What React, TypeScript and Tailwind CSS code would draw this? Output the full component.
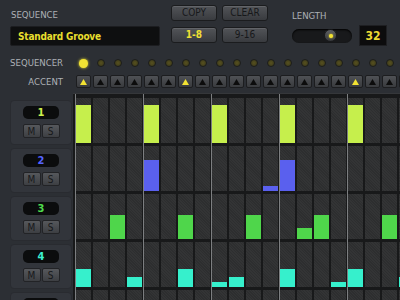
import React from "react";

const COLS = 20;
const ACCENTS = [0, 6, 16];

type Track = { n: string; num: string; bar: string; bars: Record<number, number>; full: boolean };

const TRACKS: Track[] = [
  { n: "1", num: "text-[#cdf04e]", bar: "bg-[#c6ef4c]", bars: { 0: 38, 4: 38, 8: 38, 12: 38, 16: 38 }, full: true },
  { n: "2", num: "text-[#5563ff]", bar: "bg-[#5a60ee]", bars: { 4: 31, 11: 5, 12: 31 }, full: true },
  { n: "3", num: "text-[#4fdc4c]", bar: "bg-[#4fd64b]", bars: { 2: 24, 6: 24, 10: 24, 13: 11, 14: 24, 18: 24 }, full: true },
  { n: "4", num: "text-[#3cf0d0]", bar: "bg-[#36f0cc]", bars: { 0: 18, 3: 10, 6: 18, 8: 5, 9: 10, 12: 18, 15: 5, 16: 18, 19: 10 }, full: true },
  { n: "5", num: "text-[#f04848]", bar: "bg-[#f04848]", bars: {}, full: false },
];

function Btn({ label, active }: { label: string; active?: boolean }) {
  return (
    <div
      className={`w-[46px] h-[16px] rounded-[3px] border border-[#1b1c1e] bg-[linear-gradient(#525458,#393b3f)] shadow-[inset_0_1px_0_#626468] flex items-center justify-center text-[10px] leading-none ${
        active ? "text-[#f0e034] font-bold" : "text-[#17181a]"
      }`}
    >
      {label}
    </div>
  );
}

function Tri({ on }: { on: boolean }) {
  return (
    <svg width="7" height="6" viewBox="0 0 7 6">
      <polygon points="3.5,0 7,6 0,6" fill={on ? "#f2e232" : "#0c0c0c"} />
    </svg>
  );
}

export default function App() {
  const cols = Array.from({ length: COLS }, (_, i) => i);
  return (
    <div className="w-[400px] h-[300px] overflow-hidden bg-[#2c2f34] flex flex-col font-['Liberation_Sans_Narrow','DejaVu_Sans_Condensed','Liberation_Sans',sans-serif]">
      {/* header */}
      <div className="flex h-[50px] shrink-0">
        <div className="ml-[10px] w-[150px] shrink-0 pt-[9px]">
          <div className="pl-[1px] text-[9.5px] leading-[12px] text-[#adb1b6]">SEQUENCE</div>
          <div className="mt-[5px] h-[20px] rounded-[2px] bg-[#0e0f10] border border-[#1c1d20] flex items-center pl-[7px] text-[10px] tracking-[-0.2px] font-bold text-[#e8de2e]">
            Standard Groove
          </div>
        </div>
        <div className="ml-[11px] pt-[5px] grid grid-cols-2 gap-x-[5px] gap-y-[6px] content-start shrink-0">
          <Btn label="COPY" />
          <Btn label="CLEAR" />
          <Btn label="1-8" active />
          <Btn label="9-16" />
        </div>
        <div className="ml-[24px] pt-[10px] flex flex-col shrink-0">
          <div className="text-[9.5px] leading-[12px] text-[#adb1b6]">LENGTH</div>
          <div className="flex items-center mt-[3px]">
            <div className="relative w-[60px] h-[14px] rounded-full bg-[#18191b] shadow-[inset_0_1px_2px_#000]">
              <div className="absolute left-[32px] top-[0.5px] w-[13px] h-[13px] rounded-full bg-[linear-gradient(#5c5e62,#36383b)] border border-[#1a1b1d] flex items-center justify-center">
                <div className="w-[4px] h-[4px] rounded-full bg-[#f2e232] shadow-[0_0_2px_#f2e232]" />
              </div>
            </div>
            <div className="ml-[7px] w-[28px] h-[21px] bg-[#0c0c0d] border border-[#1e1f22] flex items-center justify-center text-[12px] font-bold text-[#ecd832]">
              32
            </div>
          </div>
        </div>
      </div>

      {/* sequencer row */}
      <div className="flex mt-[6px] h-[14px] items-center shrink-0">
        <div className="w-[63px] shrink-0 text-right text-[9.5px] leading-none text-[#adb1b6]">SEQUENCER</div>
        <div className="ml-[13px] flex gap-[2px] shrink-0">
          {cols.map((i) => (
            <div key={i} className="w-[15px] shrink-0 flex justify-center">
              {i === 0 ? (
                <div className="w-[9px] h-[9px] rounded-full bg-[#f2e434] shadow-[0_0_3px_#f2e434]" />
              ) : (
                <div className="w-[8px] h-[8px] rounded-full border border-[#1d1e1b] bg-[radial-gradient(circle,#57511f_0,#45411c_60%,#2d2c1a_100%)]" />
              )}
            </div>
          ))}
        </div>
      </div>

      {/* accent row */}
      <div className="flex mt-[5px] h-[13px] items-center shrink-0">
        <div className="w-[63px] shrink-0 text-right text-[9.5px] leading-none text-[#adb1b6]">ACCENT</div>
        <div className="ml-[13px] flex gap-[2px] shrink-0">
          {cols.map((i) => (
            <div
              key={i}
              className="w-[15px] h-[13px] shrink-0 rounded-[2px] bg-[linear-gradient(#4f5155,#393b3e)] border border-[#1c1d1f] flex items-center justify-center"
            >
              <Tri on={ACCENTS.includes(i)} />
            </div>
          ))}
        </div>
      </div>

      {/* main */}
      <div className="flex mt-[5px] flex-1 min-h-0">
        <div className="w-[73px] shrink-0 pt-[7px] pl-[10px] flex flex-col gap-[3px]">
          {TRACKS.map((t) => (
            <div
              key={t.n}
              className="w-[62px] h-[45px] shrink-0 rounded-[4px] bg-[#32353b] border border-[#292b30] flex flex-col items-center pt-[5px]"
            >
              <div className={`w-[36px] h-[13px] rounded-[5px] bg-[#0b0c0d] flex items-center justify-center text-[11px] leading-none font-bold ${t.num}`}>
                {t.full ? t.n : ""}
              </div>
              {t.full ? (
                <div className="mt-[5px] flex gap-[1px]">
                  {["M", "S"].map((l) => (
                    <div
                      key={l}
                      className="w-[18px] h-[14px] rounded-[2px] bg-[linear-gradient(#56585c,#3d3f43)] border border-[#222326] flex items-center justify-center text-[10px] text-[#17181a]"
                    >
                      {l}
                    </div>
                  ))}
                </div>
              ) : null}
            </div>
          ))}
        </div>
        <div className="flex-1 bg-[#18191a] border-t border-[#35373a] flex overflow-hidden pl-[1px]">
          {cols.map((i) => (
            <div key={i} className="w-[17px] shrink-0 flex">
              <div className="w-[1px]" />
              <div className={`w-[1px] ${i % 4 === 0 ? "bg-[#7c7e80]" : ""}`} />
              <div className="w-[15px] pt-[4px] flex flex-col gap-[3px]">
                {TRACKS.map((t, r) => {
                  const h = t.bars[i];
                  return (
                    <div
                      key={r}
                      className="h-[45px] shrink-0 bg-[repeating-linear-gradient(45deg,#333435_0px,#333435_1px,#2d2e2f_1px,#2d2e2f_2px)] flex flex-col justify-end"
                    >
                      {h ? <div className={`w-full ${t.bar}`} style={{ height: h }} /> : null}
                    </div>
                  );
                })}
              </div>
            </div>
          ))}
        </div>
      </div>
    </div>
  );
}
